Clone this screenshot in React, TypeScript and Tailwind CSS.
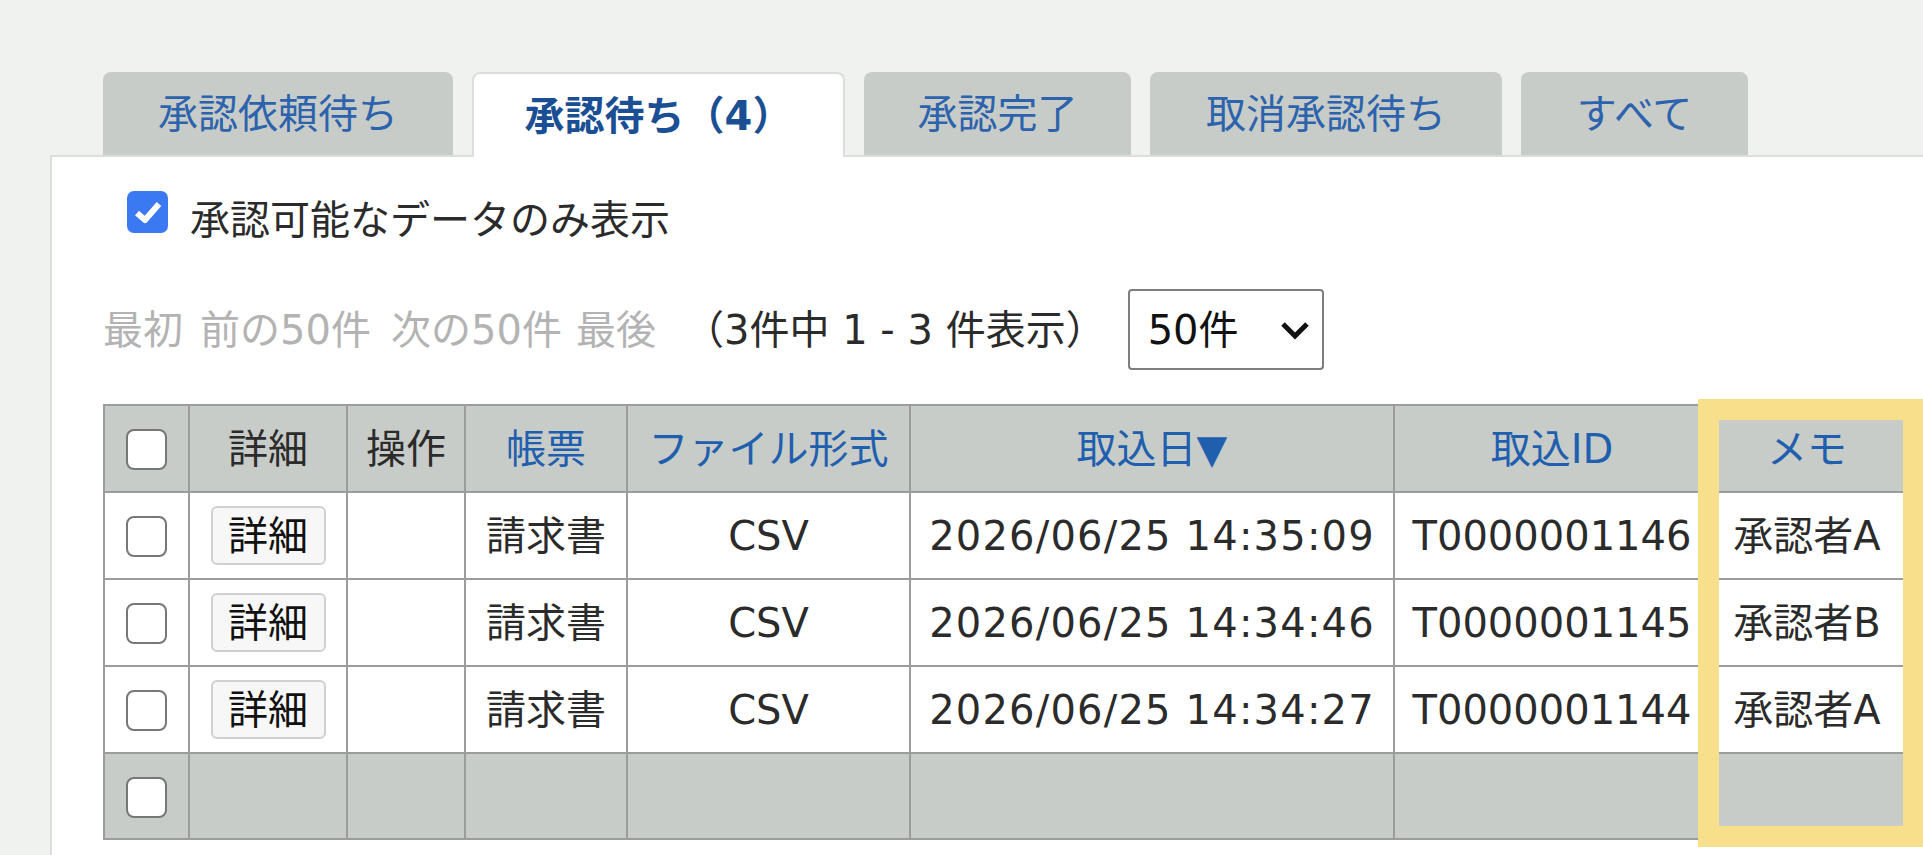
import React from "react";

const tabs = [
  { label: "承認依頼待ち", w: "w-[350px]", active: false },
  { label: "承認待ち（4）", w: "w-[373px]", active: true },
  { label: "承認完了", w: "w-[267px]", active: false },
  { label: "取消承認待ち", w: "w-[352px]", active: false },
  { label: "すべて", w: "w-[227px]", active: false },
];

const rows = [
  { date: "2026/06/25 14:35:09", id: "T0000001146", memo: "承認者A" },
  { date: "2026/06/25 14:34:46", id: "T0000001145", memo: "承認者B" },
  { date: "2026/06/25 14:34:27", id: "T0000001144", memo: "承認者A" },
];

function Box() {
  return (
    <span className="inline-block w-[41px] h-[41px] border-2 border-[#777777] rounded-[8px] bg-white align-middle" />
  );
}

const cell = "border-2 border-[#9c9c9c] text-center align-middle p-0";
const head = cell + " bg-[#c8ccc8] font-normal";

export default function App() {
  return (
    <div className="relative w-[1923px] h-[855px] overflow-hidden bg-[#f0f2f0] text-[40px] leading-none text-[#2b2b2b] font-['DejaVu_Sans','Noto_Sans_CJK_JP',sans-serif]">
      <div className="pt-[72px]">
        {/* tabs */}
        <div className="relative z-10 flex items-start gap-[19px] pl-[103px] h-[83px]">
          {tabs.map((t) =>
            t.active ? (
              <div
                key={t.label}
                className={`${t.w} h-[85px] flex items-center justify-center bg-white border-2 border-b-0 border-[#dcdedc] rounded-t-[8px] font-bold text-[#1b4f94]`}
              >
                {t.label}
              </div>
            ) : (
              <div
                key={t.label}
                className={`${t.w} h-[83px] flex items-center justify-center bg-[#c8ccc8] rounded-t-[8px] text-[#2d63ad]`}
              >
                {t.label}
              </div>
            )
          )}
        </div>

        {/* panel */}
        <div className="ml-[50px] h-[700px] bg-white border-t-2 border-l-2 border-[#dcdedc] pl-[51px]">
          <div className="mt-[34px] ml-[24px] h-[42px] flex items-center gap-[22px]">
            <span className="w-[41px] h-[42px] rounded-[7px] bg-[#3b79f3] flex items-center justify-center">
              <svg width="30" height="26" viewBox="0 0 30 26">
                <path
                  d="M4 14 L12 21 L26 5"
                  fill="none"
                  stroke="white"
                  strokeWidth="6"
                  strokeLinejoin="round"
                />
              </svg>
            </span>
            <span className="pt-[15px]">承認可能なデータのみ表示</span>
          </div>

          <div className="mt-[56px] h-[81px] flex items-center">
            <span className="w-[97px] text-[#b3b3b3]">最初</span>
            <span className="w-[191px] text-[#b3b3b3]">前の50件</span>
            <span className="w-[185px] text-[#b3b3b3]">次の50件</span>
            <span className="w-[108px] text-[#b3b3b3]">最後</span>
            <span>（3件中 1 - 3 件表示）</span>
            <div className="ml-[22px] w-[196px] h-[81px] border-2 border-[#7e7e7e] rounded-[4px] flex items-center justify-between pl-[18px] pr-[12px] text-[#111]">
              <span>50件</span>
              <svg width="30" height="20" viewBox="0 0 30 20">
                <path d="M3 4 L15 16 L27 4" fill="none" stroke="#111" strokeWidth="5" />
              </svg>
            </div>
          </div>

          <table className="mt-[34px] table-fixed border-collapse w-[1800px]">
            <colgroup>
              <col className="w-[85px]" />
              <col className="w-[158px]" />
              <col className="w-[118px]" />
              <col className="w-[162px]" />
              <col className="w-[283px]" />
              <col className="w-[484px]" />
              <col className="w-[316px]" />
              <col className="w-[194px]" />
            </colgroup>
            <thead>
              <tr className="h-[87px]">
                <th className={head}>
                  <Box />
                </th>
                <th className={head}>詳細</th>
                <th className={head}>操作</th>
                <th className={head + " text-[#1f5fae]"}>帳票</th>
                <th className={head + " text-[#1f5fae]"}>ファイル形式</th>
                <th className={head + " text-[#1f5fae]"}>取込日▼</th>
                <th className={head + " text-[#1f5fae]"}>取込ID</th>
                <th className={head + " text-[#1f5fae]"}>メモ</th>
              </tr>
            </thead>
            <tbody>
              {rows.map((r) => (
                <tr key={r.id} className="h-[87px] bg-white">
                  <td className={cell}>
                    <Box />
                  </td>
                  <td className={cell}>
                    <span className="inline-flex items-center justify-center w-[115px] h-[59px] bg-[#f6f7f6] border-2 border-[#cfd1cf] rounded-[6px] text-[#111]">
                      詳細
                    </span>
                  </td>
                  <td className={cell}></td>
                  <td className={cell}>請求書</td>
                  <td className={cell}>CSV</td>
                  <td className={cell + " tracking-[1.2px]"}>{r.date}</td>
                  <td className={cell}>{r.id}</td>
                  <td className={cell}>{r.memo}</td>
                </tr>
              ))}
              <tr className="h-[86px]">
                <td className={head}>
                  <Box />
                </td>
                <td className={head}></td>
                <td className={head}></td>
                <td className={head}></td>
                <td className={head}></td>
                <td className={head}></td>
                <td className={head}></td>
                <td className={head}></td>
              </tr>
            </tbody>
          </table>
        </div>
      </div>

      {/* highlight annotation */}
      <div className="absolute left-[1698px] top-[399px] w-[226px] h-[448px] border-[21px] border-[#f8df8b]" />
    </div>
  );
}
